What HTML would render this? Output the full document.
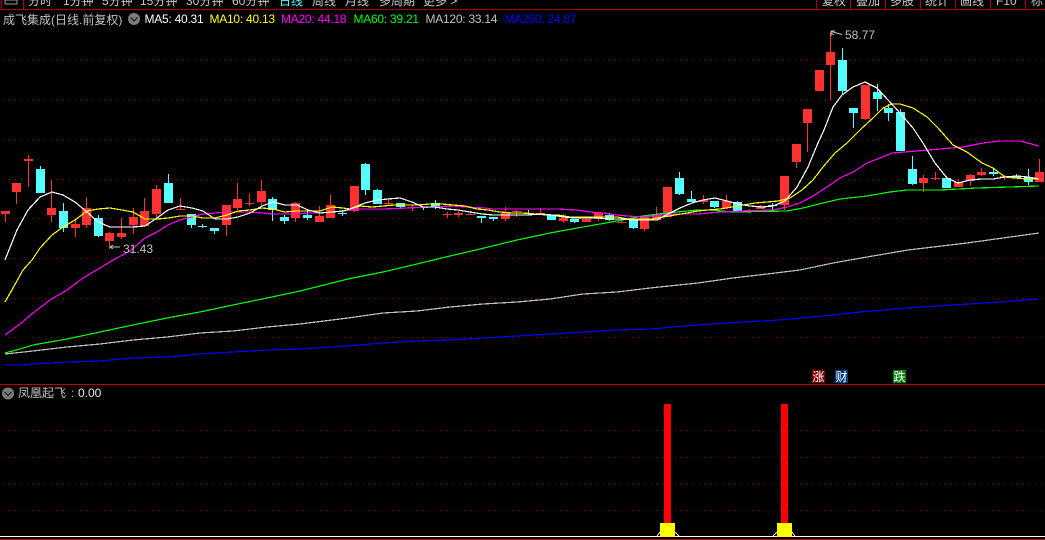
<!DOCTYPE html>
<html><head><meta charset="utf-8"><style>
html,body{margin:0;padding:0;background:#000;width:1045px;height:540px;overflow:hidden}
svg{display:block;position:absolute;left:0;top:0}
text{font-family:"Liberation Sans","WenQuanYi Zen Hei","Noto Sans CJK SC",sans-serif;font-size:12px}
.m{letter-spacing:-.25px}
.t{font-family:"Liberation Sans","WenQuanYi Zen Hei","Noto Sans CJK SC",sans-serif;fill:#c8c8c8}
</style></head><body>
<svg width="1045" height="540" viewBox="0 0 1045 540" xmlns="http://www.w3.org/2000/svg">
<rect width="1045" height="540" fill="#000"/>
<g class="t">
<text x="28" y="5">分时</text><text x="63" y="5">1分钟</text><text x="102" y="5">5分钟</text><text x="140" y="5">15分钟</text><text x="186" y="5">30分钟</text><text x="232" y="5">60分钟</text><text x="279" y="5" style="fill:#54ffff">日线</text><text x="312" y="5">周线</text><text x="345" y="5">月线</text><text x="379" y="5">多周期</text><text x="423" y="5">更多 &gt;</text>
<text x="822" y="5">复权</text><text x="856" y="5">叠加</text><text x="890" y="5">多股</text><text x="925" y="5">统计</text><text x="960" y="5">画线</text><text x="996" y="5">F10</text><text x="1031" y="5">标</text>
</g>
<rect x="5" y="0" width="12" height="4" fill="none" stroke="#999"/>
<g fill="none" stroke="#b00000" stroke-width="1" shape-rendering="crispEdges">
<path d="M0 9.5H1045M1.5 0V9M23.5 0V9M816.5 0V9M850.5 0V9M885.5 0V9M920.5 0V9M955.5 0V9M990.5 0V9M1025.5 0V9"/>
</g>
<rect x="0" y="384" width="1045" height="1" fill="#c00000"/>
<rect x="0" y="539" width="1045" height="1" fill="#c00000"/>
<g fill="none" stroke="#900000" stroke-width="1" stroke-dasharray="1 5" shape-rendering="crispEdges">
<path d="M3 60.5H1045M3 100.5H1045M3 139.5H1045M3 179.5H1045M3 218.5H1045M3 258.5H1045M3 298.5H1045M3 337.5H1045M3 430.5H1045M3 457.5H1045M3 483.5H1045M3 510.5H1045"/>
</g>
<g fill="none" shape-rendering="crispEdges">
<path stroke="#ff3232" stroke-width="1" d="M5.5 211V222M16.5 183V204M28.5 155V187M51.5 180V222M75.5 220V237M86.5 197V228M109.5 232V249M121.5 218V239M133.5 208V234M144.5 198V227M156.5 185V220M180.5 198V210M226.5 205V236M237.5 183V210M249.5 194V206M261.5 180V205M295.5 202V222M319.5 206V222M330.5 195V218M354.5 186V212M388.5 198V205M412.5 205V211M447.5 212V218M458.5 211V217M470.5 211V215M505.5 207V221M516.5 210V217M540.5 208V214M563.5 214V223M586.5 219V222M598.5 213V221M621.5 219V223M644.5 217V231M656.5 207V220M667.5 187V217M703.5 195V204M726.5 195V209M749.5 209V213M760.5 205V209M784.5 176V210M796.5 144V168M807.5 109V152M819.5 70V91M830.5 33V100M865.5 85V120M923.5 175V192M935.5 172V180M958.5 179V187M970.5 174V186M981.5 168V176M1004.5 175V180M1039.5 159V182"/>
<path stroke="#ff3232" stroke-width="9" d="M5.5 211V214M16.5 183V192M28.5 159V161M51.5 208V215M75.5 224V228M86.5 208V225M109.5 233V241M121.5 233V237M133.5 217V225M144.5 211V226M156.5 189V214M180.5 209V210M226.5 205V225M237.5 199V208M249.5 203V204M261.5 191V202M295.5 203V218M319.5 216V222M330.5 205V218M354.5 186V211M388.5 203V204M412.5 207V208M447.5 214V215M458.5 213V215M470.5 214V215M505.5 213V219M516.5 211V212M540.5 213V214M563.5 218V221M586.5 219V222M598.5 213V219M621.5 222V223M644.5 217V229M656.5 215V220M667.5 187V217M703.5 200V202M726.5 201V208M749.5 210V211M760.5 206V209M784.5 176V205M796.5 144V162M807.5 109V123M819.5 70V91M830.5 52V65M865.5 85V119M923.5 178V183M935.5 178V179M958.5 182V187M970.5 175V181M981.5 172V175M1004.5 176V177M1039.5 172V182"/>
<path stroke="#54ffff" stroke-width="1" d="M40.5 166V193M63.5 203V232M98.5 215V237M168.5 174V203M191.5 214V228M202.5 224V228M214.5 228V234M272.5 197V221M284.5 215V224M307.5 210V220M342.5 210V216M365.5 163V195M377.5 189V204M400.5 203V208M423.5 207V210M435.5 200V209M481.5 216V223M493.5 217V221M528.5 210V215M551.5 215V220M574.5 219V223M609.5 213V221M633.5 220V229M679.5 172V195M691.5 191V202M714.5 201V208M737.5 201V211M772.5 203V210M842.5 48V95M853.5 108V128M877.5 84V111M888.5 104V121M900.5 109V151M912.5 156V185M946.5 178V188M993.5 169V176M1016.5 174V178M1028.5 169V185"/>
<path stroke="#54ffff" stroke-width="9" d="M40.5 169V193M63.5 211V228M98.5 218V236M168.5 183V203M191.5 214V225M202.5 226V227M214.5 228V231M272.5 199V210M284.5 217V221M307.5 215V218M342.5 213V214M365.5 164V190M377.5 190V204M400.5 203V207M423.5 207V208M435.5 203V207M481.5 216V218M493.5 217V219M528.5 213V214M551.5 215V220M574.5 219V222M609.5 215V220M633.5 220V228M679.5 178V194M691.5 199V202M714.5 201V207M737.5 202V211M772.5 205V206M842.5 60V91M853.5 108V113M877.5 92V99M888.5 108V113M900.5 112V151M912.5 169V184M946.5 178V188M993.5 172V174M1016.5 176V178M1028.5 177V182"/>
</g>
<g fill="none" stroke-width="1.2" shape-rendering="crispEdges">
<polyline stroke="#0000ff" points="5,365 22,365 33,364 67,362 100,361 133,358 167,357 200,354 233,352 267,350 300,349 348,346 383,343 417,341 450,340 483,338 517,336 550,334 583,332 617,330 650,329 698,325 743,322 780,320 823,316 860,312 907,308 953,305 1000,302 1038,299"/>
<polyline stroke="#c0c0c0" points="5,354 33,351 67,347 100,344 133,340 167,337 200,333 233,331 267,327 300,324 348,318 383,313 417,311 450,307 483,304 517,302 550,299 583,294 617,292 650,288 698,283 733,278 767,274 800,270 833,263 867,257 908,250 967,243 1039,233"/>
<polyline stroke="#00ff00" points="5,353 20,349 33,345 67,339 100,332 133,325 167,318 200,312 233,305 267,298 300,291 348,279 383,272 417,264 450,256 476,250 517,240 550,233 583,227 617,221 643,216 667,213 697,210 710,210 733,212 787,211 803,208 823,203 840,199 867,196 890,192 907,190 940,190 977,188 1010,187 1039,186"/>
<polyline stroke="#ff00ff" points="5,335 20,324 33,313 50,300 67,290 83,278 100,268 115,259 130,251 145,238 157,232 168,225 180,220 192,217 203,214 215,213 227,212 238,212 250,212 262,213 273,214 285,214 297,214 308,213 320,213 332,212 343,211 360,209 383,209 407,208 430,207 453,206 465,207 485,208 492,209 523,209 557,209 577,210 590,212 603,213 617,215 628,216 642,217 663,215 675,214 697,214 720,212 773,210 787,207 800,203 813,196 827,187 840,178 853,172 867,163 880,158 892,153 917,151 940,149 963,147 983,143 1000,141 1020,141 1039,146"/>
<polyline stroke="#ffff00" points="5,302 13,288 23,270 32,260 40,248 52,235 63,227 75,220 87,211 98,209 110,208 122,210 133,212 145,219 157,219 168,218 180,216 192,216 203,218 215,218 227,215 238,211 250,210 262,208 273,209 285,212 297,211 308,211 320,211 332,207 343,208 350,209 360,206 372,207 383,206 395,205 407,205 418,205 430,204 442,204 453,205 465,206 477,209 488,210 500,212 512,213 523,213 535,214 547,215 558,215 570,217 582,217 593,217 605,217 617,217 628,219 640,219 652,219 663,217 675,215 687,213 698,211 708,210 720,209 732,207 743,205 755,203 767,202 778,201 790,198 802,190 813,180 823,167 835,153 847,143 860,130 861,129 873,118 883,108 892,104 900,104 913,108 927,117 938,128 953,145 967,152 982,163 993,168 1005,177 1015,178 1027,179 1039,179"/>
<polyline stroke="#ffffff" points="5,260 9,250 17,230 28,210 40,197 52,192 63,195 75,202 87,212 98,222 110,227 122,227 133,227 145,226 157,218 168,210 180,206 192,208 203,211 215,219 227,219 238,217 250,213 262,206 273,202 285,205 297,205 308,210 320,213 332,212 343,211 350,209 365,203 377,200 388,199 400,198 412,202 423,207 435,207 447,209 458,210 470,212 482,214 493,215 505,215 517,215 528,215 540,214 552,215 563,217 575,218 587,218 598,218 610,219 622,219 633,220 645,220 657,220 668,214 680,208 692,203 703,200 715,198 727,201 738,204 750,206 762,207 773,206 785,201 797,187 808,167 818,143 824,130 833,107 842,95 853,87 865,82 877,88 888,100 900,113 913,128 923,143 935,163 947,178 958,183 970,180 982,179 993,179 1005,177 1017,176 1028,177 1039,179"/>
</g>
<g fill="none" stroke="#c0c0c0" stroke-width="1">
<path d="M110 247H120M110 247L113 245M110 247L113 249M831 31.5L842 34.5M831 31V36M831 31L835 31M831 33L834 35"/>
</g>
<text x="123" y="253" fill="#c0c0c0">31.43</text>
<text x="845" y="39" fill="#c0c0c0">58.77</text>
<text x="3" y="24" fill="#c0c0c0">成飞集成(日线.前复权)</text>
<circle cx="134" cy="19" r="6" fill="#7c7c7c"/>
<path d="M130.5 17.5L134 21L137.5 17.5" fill="none" stroke="#222" stroke-width="1.3"/>
<text class="m" x="144.5" y="23" fill="#ffffff">MA5: 40.31</text>
<text class="m" x="209.5" y="23" fill="#ffff00">MA10: 40.13</text>
<text class="m" x="281" y="23" fill="#ff00ff">MA20: 44.18</text>
<text class="m" x="353.5" y="23" fill="#00ff00">MA60: 39.21</text>
<text class="m" x="425.5" y="23" fill="#c0c0c0">MA120: 33.14</text>
<text class="m" x="504.5" y="23" fill="#0000ff">MA250: 24.87</text>
<rect x="812" y="370" width="13" height="13" fill="#800000"/>
<rect x="835" y="370" width="13" height="13" fill="#003c78"/>
<rect x="893" y="370" width="13" height="13" fill="#008000"/>
<text x="812.5" y="381" fill="#fff">涨</text>
<text x="835.5" y="381" fill="#fff">财</text>
<text x="893.5" y="381" fill="#fff">跌</text>
<circle cx="8" cy="393.5" r="6" fill="#7c7c7c"/>
<path d="M4.5 392L8 395.5L11.5 392" fill="none" stroke="#222" stroke-width="1.3"/>
<text x="18" y="397" fill="#c0c0c0">凤凰起飞</text>
<text x="71" y="397" fill="#c0c0c0">:</text>
<text x="78" y="397" fill="#e8e8e8">0.00</text>
<rect x="0" y="536" width="1045" height="1" fill="#fff"/>
<path d="M657 536L660 532M675 532L679 536M773 536L777 532M792 532L795 536" stroke="#fff" stroke-width="1" fill="none"/>
<rect x="664" y="404" width="7" height="119" fill="#ff0000"/>
<rect x="781" y="404" width="7" height="119" fill="#ff0000"/>
<rect x="660" y="523" width="15" height="14" fill="#ffff00"/>
<rect x="777" y="523" width="15" height="14" fill="#ffff00"/>
</svg>
</body></html>
